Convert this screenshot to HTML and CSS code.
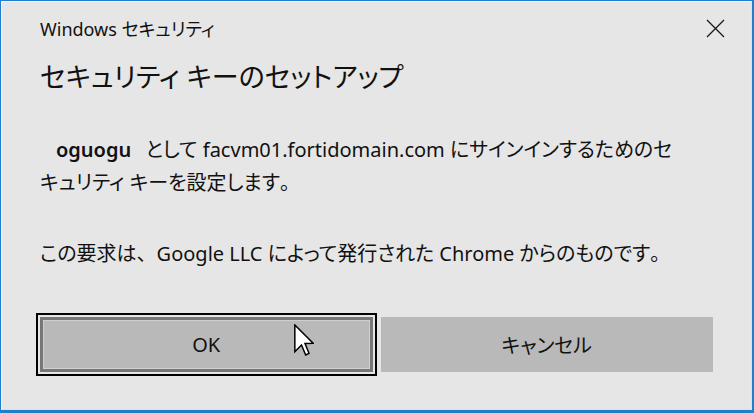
FILE: index.html
```html
<!DOCTYPE html>
<html lang="ja">
<head>
  <meta charset="UTF-8">
  <title>Windows セキュリティ</title>
  <link rel="stylesheet" href="styles.css">
</head>
<body>

<div class="dialog">
  <div class="titlebar">
    <span class="app-name">Windows セキュリティ</span>
    <button class="close" aria-label="閉じる">
      <svg width="19" height="19" viewBox="0 0 19 19">
        <path d="M1 1 L18 18 M18 1 L1 18" stroke="#1a1a1a" stroke-width="1.3" fill="none"/>
      </svg>
    </button>
  </div>

  <h1 class="heading">セキュリティ キーのセットアップ</h1>

  <div class="message">
    <p><span class="account">oguogu</span>として facvm01.fortidomain.com にサインインするためのセ<br>キュリティ キーを設定します<span class="punct">。</span></p>
    <p>この要求は<span class="punct">、</span>Google LLC によって発行された Chrome からのものです<span class="punct">。</span></p>
  </div>

  <div class="actions">
    <button class="btn btn-default">OK</button>
    <button class="btn">キャンセル</button>
  </div>

  <svg class="cursor" width="20" height="32" viewBox="0 0 12 19">
    <path d="M0.5 0.5 L0.5 16.5 L4.5 12.5 L7 18.5 L9 17.5 L6.6 11.6 L11.5 11.5 Z" fill="#fff" stroke="#000" stroke-width="0.9" stroke-linejoin="miter"/>
  </svg>
</div>

</body>
</html>
```

FILE: styles.css
```css
body {
  margin: 0;
  background: #e6e6e6;
}

.dialog {
  position: relative;
  width: 754px;
  height: 413px;
  box-sizing: border-box;
  display: flex;
  flex-direction: column;
  padding: 12px 39px 0 39px;
  background: #e6e6e6;
  border: 1px solid #1f7fcf;
  border-right-width: 2px;
  border-bottom-width: 3px;
  box-shadow: inset 1px 1px 0 #f3f3f3, inset -1px -1px 0 #cfe4f5;
  font-family: "Noto Sans", "Noto Sans CJK JP", sans-serif;
  font-feature-settings: "palt";
  color: #111;
}

.titlebar {
  display: flex;
  align-items: center;
  justify-content: space-between;
  height: 30px;
}

.app-name {
  font-size: 18px;
}

.close {
  display: flex;
  margin-right: -12px;
  padding: 0;
  border: none;
  background: none;
}

.heading {
  margin: 14px 0 0;
  font-size: 27px;
  font-weight: 400;
  line-height: 40px;
}

.message {
  margin-top: 36px;
  font-size: 20px;
  line-height: 33px;
}

.message p {
  margin: 0;
}

.message p + p {
  margin-top: 38px;
}

.punct {
  font-feature-settings: normal;
}

.account {
  padding: 0 14px 0 16px;
  font-weight: 600;
}

.actions {
  display: grid;
  grid-template-columns: 1fr 1fr;
  gap: 8px;
  margin-top: auto;
  margin-bottom: 38px;
}

.btn {
  height: 55px;
  box-sizing: border-box;
  padding: 0;
  border: none;
  background: #b9b9b9;
  font-family: inherit;
  font-feature-settings: "palt";
  font-size: 20px;
  color: #111;
}

.btn-default {
  border: 3px solid #777;
  box-shadow: inset 0 0 0 1px #cfcfcf;
  outline: 2px solid #000;
  outline-offset: 2px;
}

.cursor {
  position: absolute;
  left: 293px;
  top: 323px;
}
```
